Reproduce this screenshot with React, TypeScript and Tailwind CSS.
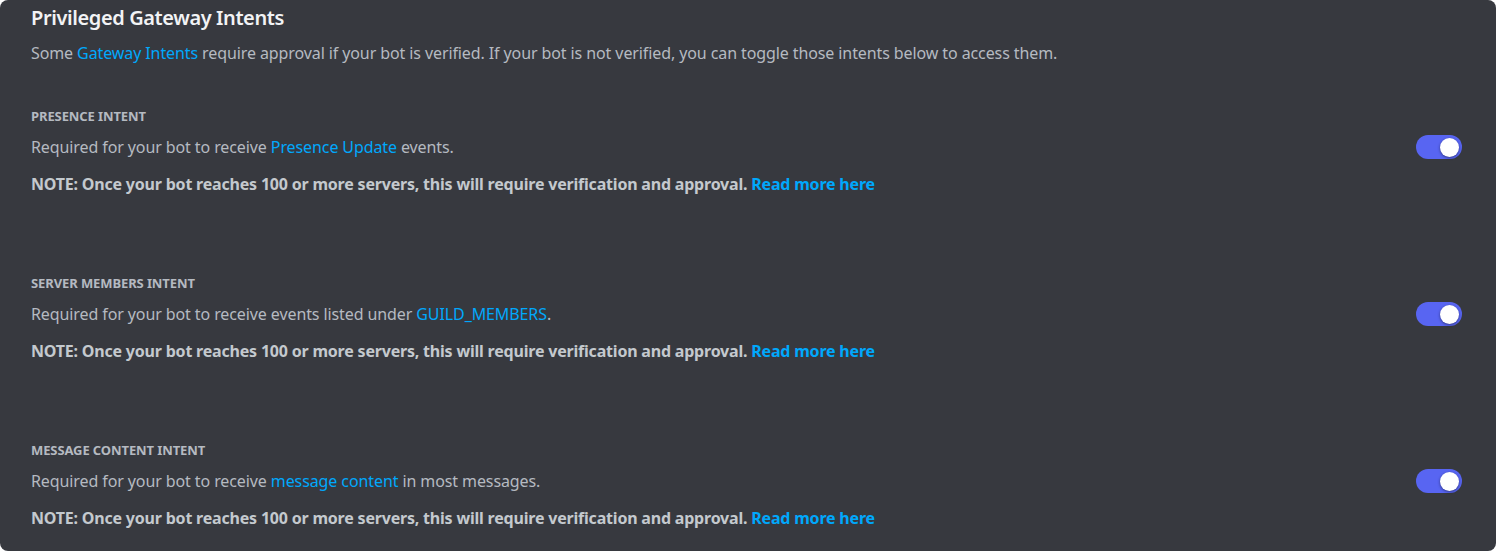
const font = { fontFamily: '"Noto Sans", "Open Sans", sans-serif' };

function Toggle() {
  return (
    <button className="relative flex h-[24px] w-[46px] shrink-0 items-center rounded-full bg-[#5865f2]">
      <span className="absolute right-[3px] h-[19px] w-[19px] rounded-full bg-white shadow-[0_1px_3px_rgba(0,0,0,0.45)]" />
    </button>
  );
}

function Link({ children, bold = false }: { children: React.ReactNode; bold?: boolean }) {
  return <span className={bold ? "font-bold text-[#00a8fc]" : "text-[#00a8fc]"}>{children}</span>;
}

function IntentRow({ title, desc }: { title: string; desc: React.ReactNode }) {
  return (
    <div className="flex flex-col">
      <div className="text-[13px] font-bold uppercase leading-[16px] tracking-[-0.1px] text-[#b5bac1]">{title}</div>
      <div className="mt-[11px] flex items-center justify-between">
        <div className="text-[16px] leading-[20px] tracking-[-0.1px] text-[#b5bac1]">{desc}</div>
        <Toggle />
      </div>
      <div className="mt-[15px] text-[16px] font-bold leading-[20px] tracking-[-0.2px] text-[#c4c9ce]">
        NOTE: Once your bot reaches 100 or more servers, this will require verification and approval.{" "}
        <Link bold>Read more here</Link>
      </div>
    </div>
  );
}

export default function App() {
  return (
    <div className="h-[551px] w-[1496px] bg-white" style={font}>
      <div className="flex h-full flex-col rounded-[8px] bg-[#37393f] pl-[31px] pr-[34px] pt-[6px]">
        <h2 className="text-[20px] font-semibold leading-[24px] tracking-[-0.4px] text-[#f2f3f5]">
          Privileged Gateway Intents
        </h2>
        <p className="mt-[13px] text-[16px] leading-[20px] tracking-[-0.1px] text-[#b5bac1]">
          Some <Link>Gateway Intents</Link> require approval if your bot is verified. If your bot is not verified, you
          can toggle those intents below to access them.
        </p>
        <div className="mt-[45px] flex flex-col gap-[81px]">
          <IntentRow
            title="Presence Intent"
            desc={
              <>
                Required for your bot to receive <Link>Presence Update</Link> events.
              </>
            }
          />
          <IntentRow
            title="Server Members Intent"
            desc={
              <>
                Required for your bot to receive events listed under <Link>GUILD_MEMBERS</Link>.
              </>
            }
          />
          <IntentRow
            title="Message Content Intent"
            desc={
              <>
                Required for your bot to receive <Link>message content</Link> in most messages.
              </>
            }
          />
        </div>
      </div>
    </div>
  );
}
